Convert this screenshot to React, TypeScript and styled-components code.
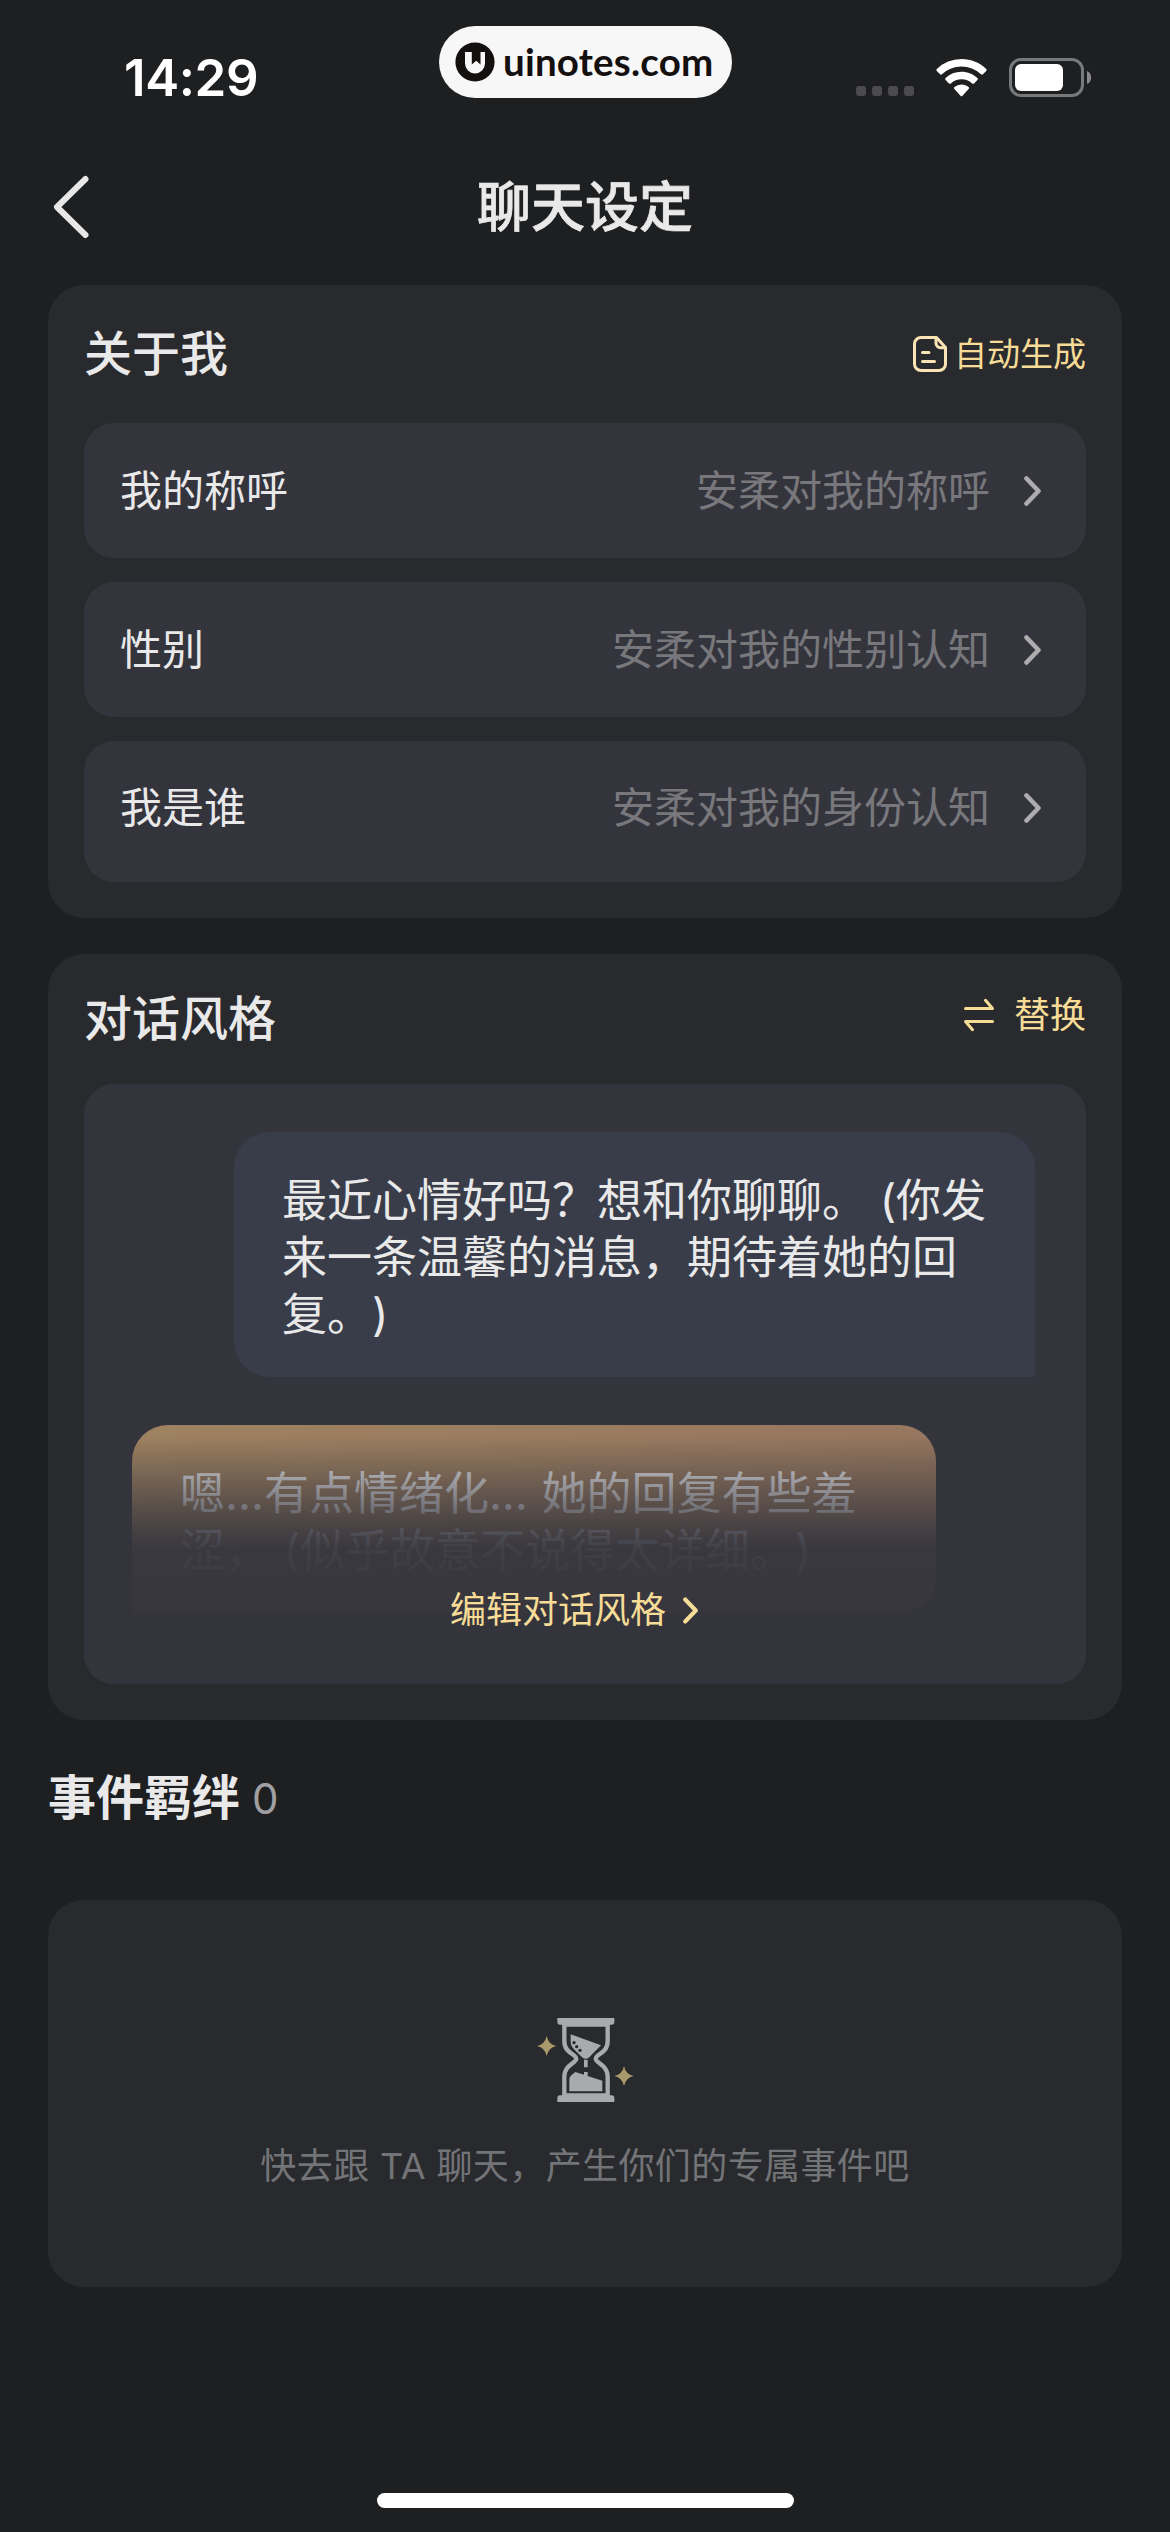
import React from "react";
import styled, { createGlobalStyle } from "styled-components";

const color = {
  page: "#1e1f21",
  card: "#292a2d",
  field: "#34343d",
  bubble: "#393d49",
  text: "#e9e9ea",
  muted: "#78787c",
  faint: "#737477",
  gold: "#f6dc96",
};

const Global = createGlobalStyle`
  * { box-sizing: border-box; }
  body {
    margin: 0;
    background: ${color.page};
    color: ${color.text};
    font-family: Inter, "Noto Sans CJK SC", sans-serif;
    text-spacing-trim: space-all;
  }
  svg { display: block; flex: none; }
`;

const Screen = styled.div`
  width: 1170px;
  height: 2532px;
  display: flex;
  flex-direction: column;
  background: ${color.page};
  overflow: hidden;
`;

const StatusBar = styled.header`
  height: 156px;
  display: grid;
  grid-template-columns: 439px 293px 1fr;
  align-items: start;
`;

const Clock = styled.div`
  padding: 48px 0 0 124px;
  font-size: 51px;
  line-height: 60px;
  font-weight: 600;
  letter-spacing: -0.4px;
  color: #fff;
`;

const Pill = styled.div`
  margin-top: 26px;
  height: 72px;
  border-radius: 36px;
  background: #f7f7f7;
  color: #14100f;
  display: flex;
  align-items: center;
  padding-left: 16px;
  gap: 8px;
  font: 700 38.5px/68px Lato, sans-serif;
  letter-spacing: 0.2px;
  white-space: nowrap;
`;

const Brand = styled.span`
  padding-bottom: 3px;
`;

const Indicators = styled.div`
  display: flex;
  align-items: flex-end;
  height: 97px;
  padding-left: 124px;
`;

const Dots = styled.div`
  display: flex;
  gap: 6px;
  padding-bottom: 1px;
  margin-right: 22px;
`;

const Dot = styled.i`
  width: 10px;
  height: 10px;
  border-radius: 3px;
  background: #4c4c4e;
`;

const BatterySlot = styled.div`
  margin-left: 22px;
`;

const NavBar = styled.nav`
  height: 102px;
  display: grid;
  grid-template-columns: 150px 1fr 150px;
  align-items: center;
`;

const Back = styled.div`
  padding-left: 51px;
`;

const PageTitle = styled.h1`
  margin: 0;
  padding-top: 2px;
  text-align: center;
  font-size: 54px;
  line-height: 60px;
  font-weight: 500;
  -webkit-text-stroke: 0.7px currentColor;
`;

const Content = styled.main`
  flex: 1;
  padding: 27px 48px 0;
  display: flex;
  flex-direction: column;
`;

const Card = styled.section<{ $top?: number }>`
  margin-top: ${(p) => p.$top ?? 0}px;
  padding: 0 36px 36px;
  border-radius: 36px;
  background: ${color.card};
`;

const CardHead = styled.div<{ $height: number }>`
  height: ${(p) => p.$height}px;
  display: flex;
  justify-content: space-between;
  align-items: center;
`;

const Heading = styled.h2`
  margin: 0;
  font-size: 48px;
  line-height: 56px;
  font-weight: 500;
`;

const Action = styled.div<{ $size: number; $gap: number; $lift?: number }>`
  display: flex;
  align-items: center;
  gap: ${(p) => p.$gap}px;
  font-size: ${(p) => p.$size}px;
  line-height: 40px;
  margin-bottom: ${(p) => p.$lift ?? 0}px;
  color: ${color.gold};
`;

const Fields = styled.div`
  display: flex;
  flex-direction: column;
  gap: 24px;
`;

const Field = styled.div`
  height: 135px;
  padding: 0 45px 0 36px;
  border-radius: 30px;
  background: ${color.field};
  display: flex;
  align-items: center;
  font-size: 42px;
  line-height: 50px;
  &:last-child {
    height: 141px;
    padding-bottom: 7px;
  }
`;

const Value = styled.span`
  margin: 0 34px 0 auto;
  color: ${color.muted};
`;

const Preview = styled.div`
  position: relative;
  height: 600px;
  padding: 48px;
  border-radius: 30px;
  background: ${color.field};
  overflow: hidden;
  display: flex;
  flex-direction: column;
  gap: 48px;
`;

const Bubble = styled.div<{ $mine?: boolean }>`
  align-self: ${(p) => (p.$mine ? "flex-end" : "flex-start")};
  width: ${(p) => (p.$mine ? 801 : 804)}px;
  margin-right: ${(p) => (p.$mine ? 3 : 0)}px;
  padding: 40px 40px 34px 48px;
  border-radius: ${(p) => (p.$mine ? "36px 36px 4px 36px" : "36px 36px 36px 4px")};
  background: ${(p) => (p.$mine ? color.bubble : "linear-gradient(90deg, #9f8260, #97775f)")};
  font-size: 45px;
  line-height: 57px;
  word-spacing: ${(p) => (p.$mine ? 0 : 1)}px;
`;

const Fade = styled.div`
  position: absolute;
  inset: 341px 0 0;
  background: linear-gradient(
    180deg,
    rgba(52, 52, 61, 0) 10px,
    rgba(52, 52, 61, 0.3) 42px,
    rgba(52, 52, 61, 0.59) 75px,
    rgba(52, 52, 61, 0.85) 108px,
    rgba(52, 52, 61, 0.94) 124px,
    rgba(52, 52, 61, 0.97) 187px,
    rgba(52, 52, 61, 1) 190px
  );
  display: flex;
  justify-content: center;
  padding-top: 164px;
`;

const EditLink = styled.div`
  height: 42px;
  display: flex;
  align-items: center;
  gap: 17px;
  margin-right: 22px;
  font-size: 36px;
  line-height: 42px;
  color: ${color.gold};
`;

const EventsHead = styled.div`
  height: 180px;
  padding-top: 50px;
  display: flex;
  align-items: flex-start;
  gap: 12px;
`;

const EventsTitle = styled(Heading)`
  font-weight: 700;
`;

const Count = styled.span`
  font-size: 42px;
  line-height: 56px;
  padding-top: 1px;
  font-weight: 400;
  color: #a0a0a2;
`;

const Empty = styled.section`
  height: 387px;
  border-radius: 36px;
  background: ${color.card};
  display: flex;
  flex-direction: column;
  align-items: center;
  padding-top: 118px;
  gap: 43px;
  color: ${color.faint};
  font-size: 36px;
  line-height: 42px;
  letter-spacing: 0.4px;
`;

const HomeBar = styled.div`
  width: 417px;
  height: 15px;
  margin: 0 auto 24px 377px;
  border-radius: 8px;
  background: #fff;
`;

const BrandMark = () => (
  <svg width="40" height="40" viewBox="0 0 40 40">
    <circle cx="20" cy="20" r="19.6" fill="#14100f" />
    <path d="M10 10h20v11.500a10 10 0 0 1-20 0z" fill="#f7f7f7" />
    <path d="M16.800 9h8.700v13.500L21.200 18.800l-4.400 3.700z" fill="#14100f" />
  </svg>
);

const Wifi = () => (
  <svg width="51" height="38" viewBox="0 0 51 38" fill="#fff">
    <path d="M25.5 0C35.2 0 44 3.800 50.200 10q.9 1 0 2l-3.300 3.300q-.9.800-1.900 0a28.300 28.300 0 0 0-39 0q-1 .8-1.900 0L.8 12q-.9-1 0-2A35.500 35.500 0 0 1 25.500 0z" />
    <path d="M25.500 12.800c6.200 0 11.800 2.400 15.900 6.300q1 1 0 2l-3.300 3.300q-.9.900-2 0a15.600 15.600 0 0 0-21.200 0q-1.100.9-2 0l-3.300-3.300q-1-1 0-2a23 23 0 0 1 15.900-6.300z" />
    <path d="M25.500 25.500c2.700 0 5.200 1 7.100 2.500q1.100 1 0 2l-6.100 6.700q-1 1-2 0L18.400 30q-1.100-1 0-2a11.300 11.300 0 0 1 7.100-2.500z" />
  </svg>
);

const Battery = () => (
  <svg width="83" height="39" viewBox="0 0 83 39">
    <rect x="1.500" y="1.500" width="72" height="36" rx="10.500" fill="none" stroke="#77787a" strokeWidth="3" />
    <rect x="6" y="6" width="48" height="27" rx="6" fill="#fff" />
    <path d="M78 13c5.500 2 5.500 11 0 13z" fill="#8a8a8c" />
  </svg>
);

const BackIcon = () => (
  <svg width="40" height="68" viewBox="0 0 40 68">
    <path d="M34.500 6 6 34l28.500 28" fill="none" stroke="#e8e8e8" strokeWidth="6" strokeLinecap="round" strokeLinejoin="round" />
  </svg>
);

const Chevron = ({ width, height, stroke }: { width: number; height: number; stroke: string }) => (
  <svg width={width} height={height} viewBox="0 0 17 30">
    <path d="M2.500 2.500 14.500 15 2.500 27.500" fill="none" stroke={stroke} strokeWidth="4.600" strokeLinecap="round" strokeLinejoin="round" />
  </svg>
);

const DocIcon = () => (
  <svg width="34" height="36" viewBox="0 0 34 36" fill="none" stroke="#fae3b4" strokeWidth="3" strokeLinecap="round" strokeLinejoin="round">
    <path d="M8 1.500h15.500l9 10V28a6.500 6.500 0 0 1-6.500 6.500H8A6.500 6.500 0 0 1 1.500 28V8A6.500 6.500 0 0 1 8 1.500z" />
    <path d="M23 2.500v4.500a4.500 4.500 0 0 0 4.500 4.700H32M9.500 16.500h6.500M9.500 25.500h12" />
  </svg>
);

const SwapIcon = () => (
  <svg width="30" height="34" viewBox="0 0 30 34" fill="none" stroke={color.gold} strokeWidth="3" strokeLinecap="round" strokeLinejoin="round">
    <path d="M1.500 10.500h27L21.500 2.300M28.500 23.500h-27l7 8.200" />
  </svg>
);

const Hourglass = () => (
  <svg width="97" height="84" viewBox="107 84 291 252">
    <g fill="#a9aaac">
      <path d="M168 84h171v12q0 8-8 8H176q-8 0-8-8zM168 336v-12q0-8 8-8h155q8 0 8 8v12z" />
      <path d="M208 133 299 166 262 203q-9 6-18 0l-26-25q-11-11-10-24zM204 304v-36q0-8 6-12l12-10 26 8v-8h11v12l44 14v32zM248 209h11v23h-11z" />
    </g>
    <path
      d="M189 100v52c0 26 14 34 30 45q12 9 0 18c-16 12-30 22-30 46v60M319 100v52c0 26-14 34-30 45q-12 9 0 18c16 12 30 22 30 46v60M184 104h140M184 316h140"
      fill="none"
      stroke="#a9aaac"
      strokeWidth="13"
    />
    <g fill={color.card}>
      <circle cx="218" cy="158" r="5" />
      <circle cx="226" cy="170" r="5" />
      <circle cx="236" cy="181" r="5" />
    </g>
    <path
      d="M136 138q5 25 29 30-24 5-29 30-5-25-29-30 24-5 29-30zM368 228q5 25 29 30-24 5-29 30-5-25-29-30 24-5 29-30z"
      fill="#a99a6c"
    />
  </svg>
);

const fields = [
  { label: "我的称呼", value: "安柔对我的称呼" },
  { label: "性别", value: "安柔对我的性别认知" },
  { label: "我是谁", value: "安柔对我的身份认知" },
];

export default function App() {
  return (
    <Screen>
      <Global />
      <StatusBar>
        <Clock>14:29</Clock>
        <Pill>
          <BrandMark />
          <Brand>uinotes.com</Brand>
        </Pill>
        <Indicators>
          <Dots>
            <Dot />
            <Dot />
            <Dot />
            <Dot />
          </Dots>
          <Wifi />
          <BatterySlot>
            <Battery />
          </BatterySlot>
        </Indicators>
      </StatusBar>
      <NavBar>
        <Back>
          <BackIcon />
        </Back>
        <PageTitle>聊天设定</PageTitle>
      </NavBar>
      <Content>
        <Card>
          <CardHead $height={138}>
            <Heading>关于我</Heading>
            <Action $size={33} $gap={7}>
              <DocIcon />
              自动生成
            </Action>
          </CardHead>
          <Fields>
            {fields.map((f) => (
              <Field key={f.label}>
                <span>{f.label}</span>
                <Value>{f.value}</Value>
                <Chevron width={17} height={30} stroke="#adadb0" />
              </Field>
            ))}
          </Fields>
        </Card>
        <Card $top={36}>
          <CardHead $height={130}>
            <Heading>对话风格</Heading>
            <Action $size={36} $gap={20} $lift={9}>
              <SwapIcon />
              替换
            </Action>
          </CardHead>
          <Preview>
            <Bubble $mine>最近心情好吗？想和你聊聊。 (你发来一条温馨的消息，期待着她的回复。)</Bubble>
            <Bubble>嗯...有点情绪化... 她的回复有些羞涩， (似乎故意不说得太详细。)</Bubble>
            <Fade>
              <EditLink>
                编辑对话风格
                <Chevron width={15} height={27} stroke={color.gold} />
              </EditLink>
            </Fade>
          </Preview>
        </Card>
        <EventsHead>
          <EventsTitle>事件羁绊</EventsTitle>
          <Count>0</Count>
        </EventsHead>
        <Empty>
          <Hourglass />
          <span>快去跟 TA 聊天，产生你们的专属事件吧</span>
        </Empty>
      </Content>
      <HomeBar />
    </Screen>
  );
}
